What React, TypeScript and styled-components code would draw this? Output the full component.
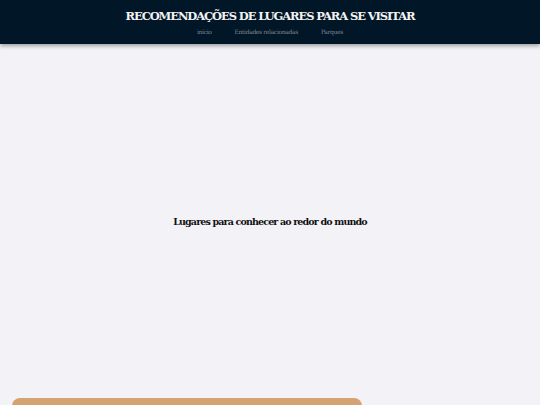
import styled, { createGlobalStyle } from "styled-components";

const Global = createGlobalStyle`
  html, body {
    margin: 0;
    padding: 0;
    background: #f3f2f7;
    font-family: "DejaVu Serif", serif;
  }
`;

const links = ["início", "Entidades relacionadas", "Parques"];

export default () => {
  return (
    <>
      <Global />
      <Header>
        <Title>RECOMENDAÇÕES DE LUGARES PARA SE VISITAR</Title>
        <Nav>
          {links.map((l) => (
            <NavLink key={l} href="#">
              {l}
            </NavLink>
          ))}
        </Nav>
      </Header>
      <Hero>
        <Heading>Lugares para conhecer ao redor do mundo</Heading>
      </Hero>
      <Cards>
        <Card />
      </Cards>
    </>
  );
};

const Header = styled.header`
  height: 44px;
  background-color: #011627;
  box-shadow: 0 2px 4px rgba(0, 0, 0, 0.35);
  display: flex;
  flex-direction: column;
  align-items: center;
  padding-top: 8px;
  box-sizing: border-box;
  position: relative;
  z-index: 1;
`;
const Title = styled.h1`
  margin: 0;
  color: #f2f2f2;
  font-size: 11.5px;
  letter-spacing: -1.1px;
  font-weight: bold;
  line-height: 16px;
`;
const Nav = styled.nav`
  display: flex;
  gap: 23px;
  margin-top: 4px;
`;
const NavLink = styled.a`
  color: #7d8895;
  font-size: 6px;
  letter-spacing: -0.35px;
  text-decoration: none;
`;
const Hero = styled.section`
  height: 354px;
  display: flex;
  align-items: center;
  justify-content: center;
`;
const Heading = styled.h2`
  margin: 0;
  font-size: 9.5px;
  letter-spacing: -0.85px;
  font-weight: bold;
  color: #111;
`;
const Cards = styled.div`
  padding: 0 12px;
`;
const Card = styled.div`
  width: 350px;
  height: 120px;
  background-color: #d4a373;
  border-radius: 8px;
`;
